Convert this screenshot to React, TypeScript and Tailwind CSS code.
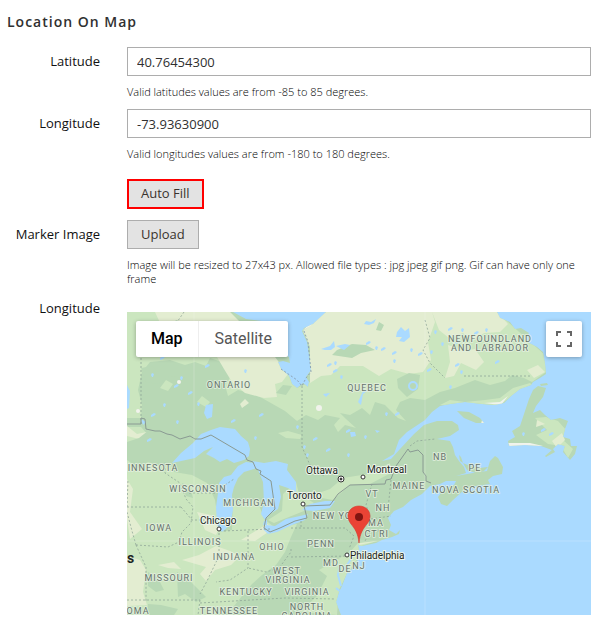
import { useState } from "react";
import type { ReactNode } from "react";

const FOREST = "#b8d8b5";
const MEADOW = "#cbe6bf";
const PLAIN = "#e3edd1";
const WATER = "#aadaff";

const regions = [
  { name: "ONTARIO", x: 229, y: 388 },
  { name: "QUEBEC", x: 367, y: 391 },
  { name: "NEWFOUNDLAND", x: 490, y: 342 },
  { name: "AND LABRADOR", x: 490, y: 351 },
  { name: "INNESOTA", x: 153, y: 471 },
  { name: "WISCONSIN", x: 198, y: 492 },
  { name: "MICHIGAN", x: 249, y: 506 },
  { name: "IOWA", x: 159, y: 531 },
  { name: "ILLINOIS", x: 200, y: 545 },
  { name: "INDIANA", x: 234, y: 560 },
  { name: "OHIO", x: 272, y: 550 },
  { name: "MISSOURI", x: 169, y: 581 },
  { name: "KENTUCKY", x: 246, y: 595 },
  { name: "TENNESSEE", x: 229, y: 614 },
  { name: "OMA", x: 138, y: 614 },
  { name: "WEST", x: 287, y: 574 },
  { name: "VIRGINIA", x: 288, y: 583 },
  { name: "VIRGINIA", x: 307, y: 595 },
  { name: "NORTH", x: 307, y: 610 },
  { name: "CAROLINA", x: 307, y: 619 },
  { name: "PENN", x: 321, y: 547 },
  { name: "NEW YORK", x: 339, y: 519 },
  { name: "VT", x: 372, y: 497 },
  { name: "NH", x: 383, y: 511 },
  { name: "MA", x: 376, y: 526 },
  { name: "CT", x: 371, y: 537 },
  { name: "RI", x: 384, y: 537 },
  { name: "MD", x: 331, y: 566 },
  { name: "DE", x: 345, y: 572 },
  { name: "NJ", x: 359, y: 569 },
  { name: "MAINE", x: 409, y: 489 },
  { name: "NB", x: 440, y: 460 },
  { name: "PE", x: 475, y: 471 },
  { name: "NOVA SCOTIA", x: 466, y: 493 },
];

const cities = [
  { name: "Ottawa", x: 306, y: 474, cx: 341, cy: 479, capital: true },
  { name: "Montreal", x: 367, y: 473, cx: 363, cy: 477 },
  { name: "Toronto", x: 287, y: 499, cx: 303, cy: 504 },
  { name: "Chicago", x: 200, y: 524, cx: 219, cy: 529 },
  { name: "Philadelphia", x: 350, y: 559, cx: 347, cy: 555 },
];

const meadows = [
  "M127 312H230L273 357L289 376L297 388L310 382V350L326 312H497L546 356V372L532 382L524 378L512 375L505 381L490 385L475 380L455 388L440 392L425 400L410 398L400 402L396 410L406 421L398 418L385 405L375 402L370 415L362 408L350 415L340 413L346 419L356 428L345 425L338 432L334 425L340 418L325 415L318 420L306 415L297 421L285 411L262 398L250 393L238 390L228 396L225 385L232 375L222 362L210 358L206 366L195 362L185 365L170 360L150 362L142 372L138 390L142 405L141 418L127 418Z",
  "M440 405L450 400L465 402L485 400L500 398L513 388L530 383L532 385L520 390L500 405Z",
  "M127 427L141 427L148 435L154 440L164 446L158 452L170 462L174 472L192 475L207 483L215 500L220 532L232 530L233 500L239 505L249 499L259 505L264 519L274 527L297 524L291 537L285 552L276 565L262 575L252 584L242 596L230 611L215 615H127Z",
  "M283 494L296 482L299 494L314 503L304 511L289 517L274 523L268 520L282 511Z",
  "M310 496L330 489L343 478L368 474L390 463L391 473L370 484L350 485L333 500Z",
  "M300 612L317 596L327 576L319 570L333 562L349 553L358 543L377 541L361 546L358 558L347 574L339 590L337 615Z",
  "M278 433L288 431L302 435L300 439L286 438Z",
  "M535 418L546 417L558 421L567 431L563 440L573 449L568 458L561 446L548 444L536 435L547 430Z",
  "M197 402L202 396L210 402L206 407Z",
  "M160 388L166 380L173 384L168 391Z",
];

const plains = [
  "M155 312H230L275 357L288 374L282 382L275 384L277 397L264 398L245 393L232 382L224 369L217 357L200 346L178 330L161 325Z",
  "M326 312H432L435 322L428 342L431 360L423 372L409 374L391 369L379 376L363 366L340 366L331 375L321 376L310 383L310 347L303 331Z",
  "M432 312H497L508 324L500 332L484 333L473 341L463 333L449 338L439 330Z",
  "M448 345L464 351L475 349L484 362L476 370L461 363L454 376L445 378L450 362Z",
  "M127 479L133 489L130 512L142 529L130 539L127 519Z",
  "M182 560L199 555L216 546L230 551L240 556L231 565L215 570L206 581L200 574L206 567Z",
  "M127 556L140 560L146 570L143 592L147 605L127 606Z",
  "M127 426L137 434L147 432L151 438L143 440L127 436Z",
  "M197 512L211 515L220 526L216 535L205 530Z",
  "M249 535L267 524L274 528L255 541L241 540Z",
  "M158 565L174 562L181 569L168 568Z",
  "M552 441L562 433L565 440L557 448Z",
  "M537 420L545 424L536 427Z",
  "M240 404L245 399L249 403L242 408Z",
  "M527 370L538 365L545 372L534 378Z",
];

const woods = [
  "M127 442L139 438L149 430L160 434L171 434L183 440L199 438L200 468L186 472L174 466L160 466L148 462L138 468L127 460Z",
  "M337 350L352 344L366 345L375 350L361 353L352 358L332 355Z",
  "M176 320L184 324L179 330L171 328Z",
  "M141 368L152 366L158 372L168 362L184 368L190 364L197 372L185 378L170 376L158 384L146 382Z",
  "M276 393L283 385L292 386L286 395Z",
  "M397 379L409 373L420 375L418 389L407 397L398 388Z",
  "M177 572L190 581L206 597L196 602L185 594L178 597Z",
  "M148 604L161 605L178 609L174 615H147Z",
  "M148 572L158 578L164 590L156 592L148 586Z",
  "M182 483L190 487L193 498L186 496Z",
  "M241 482L249 475L260 475L264 483L263 497L249 500L240 494Z",
  "M376 330L379 322L384 325L381 331Z",
];

const lakes = [
  "M172 463L181 453L193 443L201 434L211 430L220 427L235 429L241 436L248 442L250 449L249 456L244 460L234 463L227 459L220 462L214 458L206 454L213 447L204 451L195 458Z",
  "M219 483L224 477L231 475L238 466L246 462L255 463L265 466L254 469L244 472L238 478L234 487L232 495L233 510L230 525L222 532L217 525L216 507L218 493Z",
  "M252 461L264 463L276 461L288 464L287 470L296 482L296 492L288 488L279 485L281 497L278 509L270 514L265 520L261 514L264 502L263 482L258 470Z",
  "M263 529L266 525L275 526L286 519L300 516L308 514L305 520L292 525L277 532L268 534Z",
  "M302 510L310 504L325 501L335 501L330 508L314 511Z",
  "M264 521L267 520L267 525L263 525Z",
  "M206 405L213 404L212 417L207 419L204 413Z",
  "M321 349L330 346L334 341L335 347L331 350L325 350Z",
  "M336 346L345 344L350 345L344 350Z",
  "M358 402L363 391L370 389L363 394L361 405Z",
  "M366 321L371 322L376 319L374 323L369 325L364 324Z",
  "M397 332L401 327L405 331L409 328L410 337L404 342L399 341L402 337L396 337Z",
  "M127 385L130 391L129 408L127 409Z",
  "M141 419L146 422L143 425Z",
  "M350 432L355 432L356 436L351 437Z",
  "M375 430L380 431L377 433Z",
  "M323 394L330 393L326 397Z",
];

const ponds = [
  [151, 375], [160, 358], [182, 353], [205, 366], [180, 378], [188, 393],
  [163, 405], [151, 415], [176, 422], [231, 421], [244, 371], [147, 440],
  [296, 427], [313, 439], [303, 447], [333, 371], [340, 377], [366, 343], [375, 348],
  [392, 353], [393, 361], [381, 349], [410, 350], [418, 354], [430, 352], [427, 370],
  [434, 332], [448, 329], [441, 344], [455, 342], [461, 330], [474, 333], [485, 330],
  [455, 365], [460, 372], [495, 362], [449, 387], [327, 365], [334, 363], [346, 431],
  [385, 414], [395, 414], [347, 455], [326, 450], [306, 455], [259, 415], [254, 438],
  [541, 430], [522, 434], [549, 434], [364, 437], [174, 386], [197, 404],
];

const stateLines =
  "M141 424V358M184 312L175 325M127 507H181M127 507L128 480M136 545L168 547L179 542L182 532L191 523L193 507L186 499L180 483L165 473L165 462M136 545L132 531L127 512M136 545L146 567V602M127 600H200M181 507L192 520H219M219 525V556L207 581L200 594M248 531V568L230 580L216 582M224 531L270 529M291 549V552L279 568L266 572L248 568M291 557L354 556M291 528L345 528L354 536L349 549M301 527V519M200 603L285 598L335 599M200 600L198 615M302 386V447L310 465L324 476M425 320L430 338L423 350L430 363L445 378M464 376H532M372 484L366 505L371 519M391 480L388 509M371 519L391 516M365 532L388 530M365 541L370 532M225 485L234 479M189 493L217 493M410 446L417 441L435 439";

function Map() {
  return (
    <svg
      viewBox="127 312 464 303"
      preserveAspectRatio="xMidYMid slice"
      className="block w-full h-[303px]"
      role="img"
      aria-label="Location map"
    >
      <rect x="127" y="312" width="464" height="303" fill={WATER} />
      <defs>
        <clipPath id="land">
          <path d="M127 312H233L246 319L262 321L275 350L289 357L290 363L283 361L278 362L281 369L289 376L292 384L297 388L303 383L308 387L309 382L306 377L311 370L309 355L307 342L302 331L304 328L313 324L326 312H497L500 318L510 322L515 329L521 328L529 333L526 338L529 343L537 347L543 352L545 364L546 374L540 378L533 382L531 385L520 389L511 396L504 403L494 405L482 404L465 402L450 404L440 406L432 412L425 420L407 432L399 440L394 454L382 461L391 459L400 449L414 434L424 425L437 421L452 421L458 425L459 430L450 436L437 439L450 441L453 447L455 455L459 461L464 467L466 473L456 476L473 473L487 471L490 461L495 456L498 458L503 467L502 474L493 476L488 480L490 484L476 486L463 491L453 500L447 506L441 504L438 497L444 489L454 485L456 481L446 481L440 484L430 486L422 494L411 500L403 507L394 511L388 518L391 525L389 530L396 534L400 530L399 534L392 537L382 540L376 543L362 546L358 545L360 556L354 567L347 573L342 586L339 592L336 602L341 615H127Z" />
          <path d="M533 390L538 386L546 388L543 397L536 406L533 413L540 410L545 415L551 420L560 418L568 421L565 429L563 437L570 439L571 446L577 446L575 454L570 460L563 452L565 446L558 444L552 450L541 446L525 445L509 446L508 441L515 437L512 431L520 426L524 414L529 399Z" />
          <path d="M457 411L469 412L480 418L484 423L476 423L464 418ZM545 456L553 449L555 452L546 457ZM463 463L470 466L479 468L488 467L484 471L476 473L467 470ZM540 384L547 383L548 385L541 386ZM459 455L461 457L463 463L460 461Z" />
        </clipPath>
      </defs>

      <g clipPath="url(#land)">
        <rect x="127" y="312" width="464" height="303" fill={FOREST} />
        <path d={meadows.join("")} fill={MEADOW} />
        <path d={plains.join("")} fill={PLAIN} />
        <path d={woods.join("")} fill={FOREST} />
        <g fill="#f1f3ec">
          <circle cx="319" cy="408" r="3" />
          <circle cx="138" cy="411" r="2" />
          <circle cx="179" cy="382" r="2" />
          <path d="M302 331L310 326L326 312L318 316ZM482 420L487 423L481 424ZM484 403L500 402L508 396L501 405ZM565 429L568 427L567 433ZM508 443L530 443L543 446L510 447Z" />
        </g>
        <path d={lakes.join("")} fill={WATER} />
        <g fill={WATER}>
          {ponds.map(([x, y], i) => (
            <path key={i} d={i % 2 ? `M${x} ${y}l3 -2l2 1l-2 2l-3 1z` : `M${x} ${y}l1 -2l2 1l-1 3l-1 0z`} />
          ))}
        </g>
        <circle cx="413" cy="386" r="4" fill="none" stroke={WATER} strokeWidth="2" />
        <path d="M340 564L338 575L341 586M336 588L341 592M351 559L345 568L349 575" fill="none" stroke={WATER} strokeWidth="2" />
      </g>

      <path d="M359 545L378 541L369 542L360 543Z" fill={PLAIN} />
      <g fill="none" strokeLinejoin="round">
        <path d={stateLines} stroke="#8ca396" strokeOpacity=".75" strokeDasharray="2 2" />
        <path d="M281 369L297 380L302 386L306 378L311 372L308 342L304 331" stroke="#8ca3b6" strokeDasharray="2 2" />
        <path
          d="M127 424H141V418L145 419L146 429L155 431L160 431L167 434L172 435L180 439L190 436L195 439L201 439L211 435L245 455L247 460L253 462L256 469L261 471L260 474L271 481L275 509L266 518L264 528L270 532L280 528L295 521L307 518L304 506L330 505L338 494L350 485L385 484L386 480L391 479L396 466L408 449L410 452L418 450L423 455V472L426 476L426 481L431 483"
          stroke="#8a9a93"
        />
      </g>
      <path d="M194 312V615M425 312V615M127 541H591" stroke="#fff" strokeOpacity=".2" />

      <g
        className="font-[Roboto,sans-serif]"
        textAnchor="middle"
        fontSize="9"
        letterSpacing="1"
        fill="#66736c"
        stroke="#e4f0e0"
        strokeWidth="2"
        strokeOpacity=".8"
        strokeLinejoin="round"
        paintOrder="stroke"
      >
        {regions.map((r) => (
          <text key={`${r.name}-${r.y}`} x={r.x} y={r.y}>
            {r.name}
          </text>
        ))}
      </g>

      <g className="font-[Roboto,sans-serif]" fontSize="10" fill="#202522">
        {cities.map((c) => (
          <g key={c.name}>
            {c.capital && <circle cx={c.cx} cy={c.cy} r="3" fill="#fff" stroke="#333" />}
            <circle cx={c.cx} cy={c.cy} r={c.capital ? 1 : 2} fill={c.capital ? "#333" : "#fff"} stroke="#333" />
            <text x={c.x} y={c.y} stroke="#edf5ea" strokeWidth="2" strokeLinejoin="round" paintOrder="stroke">
              {c.name}
            </text>
          </g>
        ))}
        <text x="127" y="563" fontSize="14" fontWeight="700">
          s
        </text>
      </g>

      {/* Pin */}
      <path
        d="M359 543C358 533 355 529 351 524C349 521 348 519 348 516C348 510 353 506 359 506C365 506 370 510 370 516C370 519 369 521 367 524C363 529 360 533 359 543Z"
        fill="#ea4335"
        stroke="#d63b2f"
        strokeWidth=".6"
      />
      <circle cx="359" cy="517" r="4" fill="#811411" />
    </svg>
  );
}

function Field({ label, htmlFor, children }: { label?: string; htmlFor?: string; children: ReactNode }) {
  return (
    <div className="grid grid-cols-[100px_1fr] gap-x-[27px]">
      <div className="text-right text-[13px] leading-7 text-[#111]">
        {label && <label htmlFor={htmlFor}>{label}</label>}
      </div>
      <div className="min-w-0">{children}</div>
    </div>
  );
}

function Note({ id, children }: { id: string; children: ReactNode }) {
  return (
    <p id={id} className="mt-[9px] text-[11px] leading-[14px] font-light text-black">
      {children}
    </p>
  );
}

const inputClass =
  "block w-full h-[29px] border border-[#adadad] bg-white px-[9px] text-[13px] text-[#303030] outline-none focus:border-[#007bdb]";

export default function App() {
  const [latitude, setLatitude] = useState("40.76454300");
  const [longitude, setLongitude] = useState("-73.93630900");
  const [view, setView] = useState("Map");

  return (
    <main className="bg-white pt-3 pr-5 pb-2 font-['Open_Sans',sans-serif]">
      <h2 className="pl-[7px] mb-[15px] text-[14px] leading-5 font-semibold tracking-[1px] text-[#303030]">
        Location On Map
      </h2>

      <form onSubmit={(e) => e.preventDefault()}>
        <div className="flex flex-col gap-[10px]">
          <Field label="Latitude" htmlFor="latitude">
            <input
              id="latitude"
              className={inputClass}
              value={latitude}
              aria-describedby="latitude-note"
              onChange={(e) => setLatitude(e.target.value)}
            />
            <Note id="latitude-note">Valid latitudes values are from -85 to 85 degrees.</Note>
          </Field>
          <Field label="Longitude" htmlFor="longitude">
            <input
              id="longitude"
              className={inputClass}
              value={longitude}
              aria-describedby="longitude-note"
              onChange={(e) => setLongitude(e.target.value)}
            />
            <Note id="longitude-note">Valid longitudes values are from -180 to 180 degrees.</Note>
          </Field>
        </div>

        <div className="mt-[18px] flex flex-col gap-[11px]">
          <Field>
            <button
              type="button"
              className="block h-[30px] border-2 border-[#f00] bg-[#e3e3e3] px-3 text-[13px] text-[#3a332e]"
            >
              Auto Fill
            </button>
          </Field>
          <Field label="Marker Image" htmlFor="marker">
            <button
              id="marker"
              type="button"
              aria-describedby="marker-note"
              className="block h-[29px] border border-[#adadad] bg-[#e3e3e3] px-[13px] text-[13px] text-[#3a332e]"
            >
              Upload
            </button>
            <Note id="marker-note">
              Image will be resized to 27x43 px. Allowed file types : jpg jpeg gif png. Gif can have only one frame
            </Note>
          </Field>
        </div>

        <div className="mt-2 grid grid-cols-[100px_1fr] gap-x-[27px]">
          <span id="map-label" className="text-right text-[13px] leading-7 text-[#111]">
            Longitude
          </span>
          <div role="group" aria-labelledby="map-label" className="relative mt-[18px] min-w-0 overflow-hidden">
            <Map />
            <div className="absolute top-[9px] left-[9px] flex h-9 bg-white rounded-xs shadow-[0_1px_4px_rgba(0,0,0,0.3)] font-[Roboto,sans-serif] text-[16px]">
              <button type="button" onClick={() => setView("Map")} className={viewClass(view === "Map", "px-[15px]")}>
                Map
              </button>
              <button
                type="button"
                onClick={() => setView("Satellite")}
                className={viewClass(view === "Satellite", "px-4 border-l border-[#eee]")}
              >
                Satellite
              </button>
            </div>
            <button
              type="button"
              aria-label="Toggle fullscreen view"
              className="absolute top-[9px] right-[9px] flex size-9 items-center justify-center rounded-xs bg-white shadow-[0_1px_4px_rgba(0,0,0,0.3)]"
            >
              <svg viewBox="0 0 18 18" className="size-[18px]" fill="#666">
                <path d="M1 1h5v2H3v3H1zM12 1h5v5h-2V3h-3zM1 12h2v3h3v2H1zM15 12h2v5h-5v-2h3z" />
              </svg>
            </button>
          </div>
        </div>
      </form>
    </main>
  );
}

function viewClass(active: boolean, base: string) {
  return active ? `${base} font-medium text-black` : `${base} text-[#565656]`;
}
